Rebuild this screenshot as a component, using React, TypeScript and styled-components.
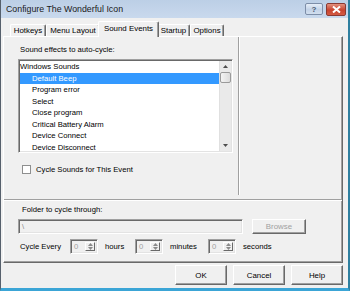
import styled, { createGlobalStyle } from "styled-components";

const GlobalStyle = createGlobalStyle`
  html, body {
    margin: 0;
    padding: 0;
    background: #f0f0f0;
  }
  body {
    font-family: "Liberation Sans", Arial, sans-serif;
  }
`;

const Window = styled.div`
  box-sizing: border-box;
  width: 350px;
  height: 291px;
  display: flex;
  flex-direction: column;
  background: #f0f0f0;
  border-left: 1px solid #56606c;
  border-right: 2px solid #2e7f9f;
  border-bottom: 3px solid #3ba5d6;
  font-size: 7.7px;
  color: #000;
  overflow: hidden;
`;

const TitleBar = styled.div`
  flex: none;
  height: 18px;
  display: flex;
  align-items: center;
  padding: 0 2px 0 5px;
  background: linear-gradient(#bccfe6, #c9d9ed);
`;

const Title = styled.div`
  flex: 1;
  font-size: 8.8px;
  color: #1a1a1a;
`;

const CaptionButton = styled.div<{ $close?: boolean }>`
  box-sizing: border-box;
  width: ${(p) => (p.$close ? 20 : 18)}px;
  height: ${(p) => (p.$close ? 13 : 12)}px;
  margin-left: ${(p) => (p.$close ? 3 : 0)}px;
  display: flex;
  align-items: center;
  justify-content: center;
  border: 1px solid ${(p) => (p.$close ? "#8a3a33" : "#7d8ea8")};
  border-radius: 2px;
  background: ${(p) =>
    p.$close
      ? "linear-gradient(#e3917f, #c8432f 55%, #d35a43)"
      : "linear-gradient(#e6eef8, #c3d3e8 55%, #d2dfef)"};
  color: #4a5a72;
  font-size: 8px;
  font-weight: bold;
`;

const Body = styled.div`
  flex: 1;
  display: flex;
  flex-direction: column;
  padding-left: 2px;
`;

const TabStrip = styled.div`
  height: 18px;
  display: flex;
  align-items: flex-end;
  padding-left: 7px;
`;

const Tab = styled.div<{ $w: number; $active?: boolean }>`
  box-sizing: border-box;
  position: relative;
  z-index: ${(p) => (p.$active ? 2 : 1)};
  width: ${(p) => p.$w + (p.$active ? 4 : 0)}px;
  height: ${(p) => (p.$active ? 16 : 12)}px;
  margin: 0 ${(p) => (p.$active ? -2 : 0)}px ${(p) => (p.$active ? -1 : 0)}px;
  padding-bottom: ${(p) => (p.$active ? 2 : 0)}px;
  display: flex;
  align-items: center;
  justify-content: center;
  background: #f0f0f0;
  border-top: 1px solid #fff;
  border-left: 1px solid #fff;
  border-right: 1px solid #696969;
  border-radius: 2px 2px 0 0;
  box-shadow: inset -1px 0 #a0a0a0;
  font-size: 7.9px;
  white-space: nowrap;
`;

const Panel = styled.div`
  box-sizing: border-box;
  width: 340px;
  height: 227px;
  display: flex;
  flex-direction: column;
  border-top: 1px solid #fff;
  border-left: 1px solid #fff;
  border-right: 1px solid #696969;
  border-bottom: 1px solid #696969;
  box-shadow: inset -1px -1px #a0a0a0;
`;

const TopSection = styled.div`
  flex: none;
  height: 163px;
  display: flex;
  border-bottom: 1px solid #fff;
  box-shadow: 0 -1px 0 #a0a0a0 inset;
`;

const LeftColumn = styled.div`
  box-sizing: border-box;
  width: 236px;
  height: 158px;
  padding: 8px 0 0 14px;
  border-right: 1px solid #fff;
  box-shadow: -1px 0 0 #a0a0a0 inset;
`;

const Label = styled.div<{ $indent?: number; $disabled?: boolean }>`
  line-height: 10px;
  height: 10px;
  margin-left: ${(p) => p.$indent ?? 0}px;
  color: ${(p) => (p.$disabled ? "#a0a0a0" : "#000")};
  white-space: nowrap;
`;

const ListBox = styled.div`
  box-sizing: border-box;
  width: 215px;
  height: 94px;
  margin-top: 4px;
  display: flex;
  background: #fff;
  border: 1px solid;
  border-color: #a0a0a0 #fff #fff #a0a0a0;
  box-shadow: inset 1px 1px #696969, inset -1px -1px #e3e3e3;
  overflow: hidden;
`;

const ListItems = styled.div`
  flex: 1;
  padding: 1px 0 0 1px;
  overflow: hidden;
`;

const ListItem = styled.div<{ $child?: boolean; $selected?: boolean }>`
  height: 11.5px;
  line-height: 11.5px;
  padding-left: ${(p) => (p.$child ? 12 : 0)}px;
  background: ${(p) => (p.$selected ? "#3399ff" : "transparent")};
  color: ${(p) => (p.$selected ? "#fff" : "#000")};
  white-space: nowrap;
`;

const ScrollBar = styled.div`
  width: 11px;
  margin: 1px 1px 1px 0;
  display: flex;
  flex-direction: column;
  align-items: center;
  background: #eaeaea;
  border-left: 1px solid #e0e0e0;
`;

const ScrollArrow = styled.div`
  height: 11px;
  display: flex;
  align-items: center;
  justify-content: center;
`;

const ScrollThumb = styled.div`
  box-sizing: border-box;
  width: 11px;
  height: 11px;
  border: 1px solid #9a9a9a;
  border-radius: 2px;
  background: linear-gradient(90deg, #f4f4f4, #dcdcdc);
`;

const ScrollTrack = styled.div`
  flex: 1;
`;

const CheckRow = styled.div`
  margin-top: 11px;
  height: 10px;
  display: flex;
  align-items: center;
  padding-left: 4px;
`;

const CheckBox = styled.div`
  box-sizing: border-box;
  width: 9px;
  height: 9px;
  margin-right: 5px;
  background: #fff;
  border: 1px solid #8e8f8f;
`;

const BottomSection = styled.div`
  flex: 1;
  padding: 4px 0 0 14px;
`;

const FieldRow = styled.div<{ $top: number }>`
  display: flex;
  align-items: center;
  height: 15px;
  margin-top: ${(p) => p.$top}px;
`;

const TextField = styled.div<{ $w: number }>`
  box-sizing: border-box;
  width: ${(p) => p.$w}px;
  height: 15px;
  margin-right: 9px;
  display: flex;
  align-items: center;
  padding-left: 3px;
  background: #f0f0f0;
  border: 1px solid;
  border-color: #a0a0a0 #fff #fff #a0a0a0;
  box-shadow: inset 1px 1px #696969, inset -1px -1px #e3e3e3;
  color: #8a8a8a;
`;

const PushButton = styled.div<{ $w: number; $h: number; $disabled?: boolean }>`
  box-sizing: border-box;
  width: ${(p) => p.$w}px;
  height: ${(p) => p.$h}px;
  display: flex;
  align-items: center;
  justify-content: center;
  background: #f0f0f0;
  border: 1px solid;
  border-color: #fff #696969 #696969 #fff;
  box-shadow: inset -1px -1px #a0a0a0;
  color: ${(p) => (p.$disabled ? "#a0a0a0" : "#000")};
  font-size: 7.9px;
`;

const Spin = styled.div`
  box-sizing: border-box;
  width: 28px;
  height: 15px;
  display: flex;
  background: #f0f0f0;
  border: 1px solid;
  border-color: #a0a0a0 #fff #fff #a0a0a0;
  box-shadow: inset 1px 1px #696969, inset -1px -1px #e3e3e3;
`;

const SpinValue = styled.div`
  flex: 1;
  display: flex;
  align-items: center;
  padding-left: 3px;
  color: #a0a0a0;
`;

const SpinButtons = styled.div`
  box-sizing: border-box;
  width: 10px;
  margin: 2px 2px 2px 0;
  display: flex;
  flex-direction: column;
  justify-content: space-around;
  align-items: center;
  border: 1px solid;
  border-color: #fff #696969 #696969 #fff;
`;

const Unit = styled.div<{ $w: number; $pad?: number }>`
  box-sizing: border-box;
  width: ${(p) => p.$w}px;
  padding-left: ${(p) => p.$pad ?? 7}px;
  white-space: nowrap;
`;

const Footer = styled.div`
  flex: 1;
  display: flex;
  justify-content: flex-end;
  align-items: flex-start;
  gap: 6px;
  padding: 2px 5px 0 0;
`;

const Arrow = ({ up, color = "#4d4d4d" }: { up?: boolean; color?: string }) => (
  <svg width="5" height="3" viewBox="0 0 5 3">
    <path d={up ? "M2.5 0 L5 3 L0 3 Z" : "M0 0 L5 0 L2.5 3 Z"} fill={color} />
  </svg>
);

const SpinBox = () => (
  <Spin>
    <SpinValue>0</SpinValue>
    <SpinButtons>
      <Arrow up color="#8a8a8a" />
      <Arrow color="#8a8a8a" />
    </SpinButtons>
  </Spin>
);

const sounds = [
  "Default Beep",
  "Program error",
  "Select",
  "Close program",
  "Critical Battery Alarm",
  "Device Connect",
  "Device Disconnect",
];

const tabs = [
  { label: "Hotkeys", w: 36 },
  { label: "Menu Layout", w: 54 },
  { label: "Sound Events", w: 57, active: true },
  { label: "Startup", w: 33 },
  { label: "Options", w: 34 },
];

export default function App() {
  return (
    <>
      <GlobalStyle />
      <Window>
        <TitleBar>
          <Title>Configure The Wonderful Icon</Title>
          <CaptionButton>?</CaptionButton>
          <CaptionButton $close>
            <svg width="9" height="7" viewBox="0 0 9 7">
              <path d="M1 0.5 L8 6.5 M8 0.5 L1 6.5" stroke="#fff" strokeWidth="2" />
            </svg>
          </CaptionButton>
        </TitleBar>
        <Body>
          <TabStrip>
            {tabs.map((t) => (
              <Tab key={t.label} $w={t.w} $active={t.active}>
                {t.label}
              </Tab>
            ))}
          </TabStrip>
          <Panel>
            <TopSection>
              <LeftColumn>
                <Label $indent={2}>Sound effects to auto-cycle:</Label>
                <ListBox>
                  <ListItems>
                    <ListItem>Windows Sounds</ListItem>
                    {sounds.map((s, i) => (
                      <ListItem key={s} $child $selected={i === 0}>
                        {s}
                      </ListItem>
                    ))}
                  </ListItems>
                  <ScrollBar>
                    <ScrollArrow>
                      <Arrow up />
                    </ScrollArrow>
                    <ScrollThumb />
                    <ScrollTrack />
                    <ScrollArrow>
                      <Arrow />
                    </ScrollArrow>
                  </ScrollBar>
                </ListBox>
                <CheckRow>
                  <CheckBox />
                  Cycle Sounds for This Event
                </CheckRow>
              </LeftColumn>
            </TopSection>
            <BottomSection>
              <Label $indent={4}>Folder to cycle through:</Label>
              <FieldRow $top={4}>
                <TextField $w={225}>\</TextField>
                <PushButton $w={54} $h={15} $disabled>
                  Browse
                </PushButton>
              </FieldRow>
              <FieldRow $top={5}>
                <Unit $w={52} $pad={2}>Cycle Every</Unit>
                <SpinBox />
                <Unit $w={37}>hours</Unit>
                <SpinBox />
                <Unit $w={45}>minutes</Unit>
                <SpinBox />
                <Unit $w={50}>seconds</Unit>
              </FieldRow>
            </BottomSection>
          </Panel>
          <Footer>
            <PushButton $w={52} $h={20}>OK</PushButton>
            <PushButton $w={52} $h={20}>Cancel</PushButton>
            <PushButton $w={52} $h={20}>Help</PushButton>
          </Footer>
        </Body>
      </Window>
    </>
  );
}
